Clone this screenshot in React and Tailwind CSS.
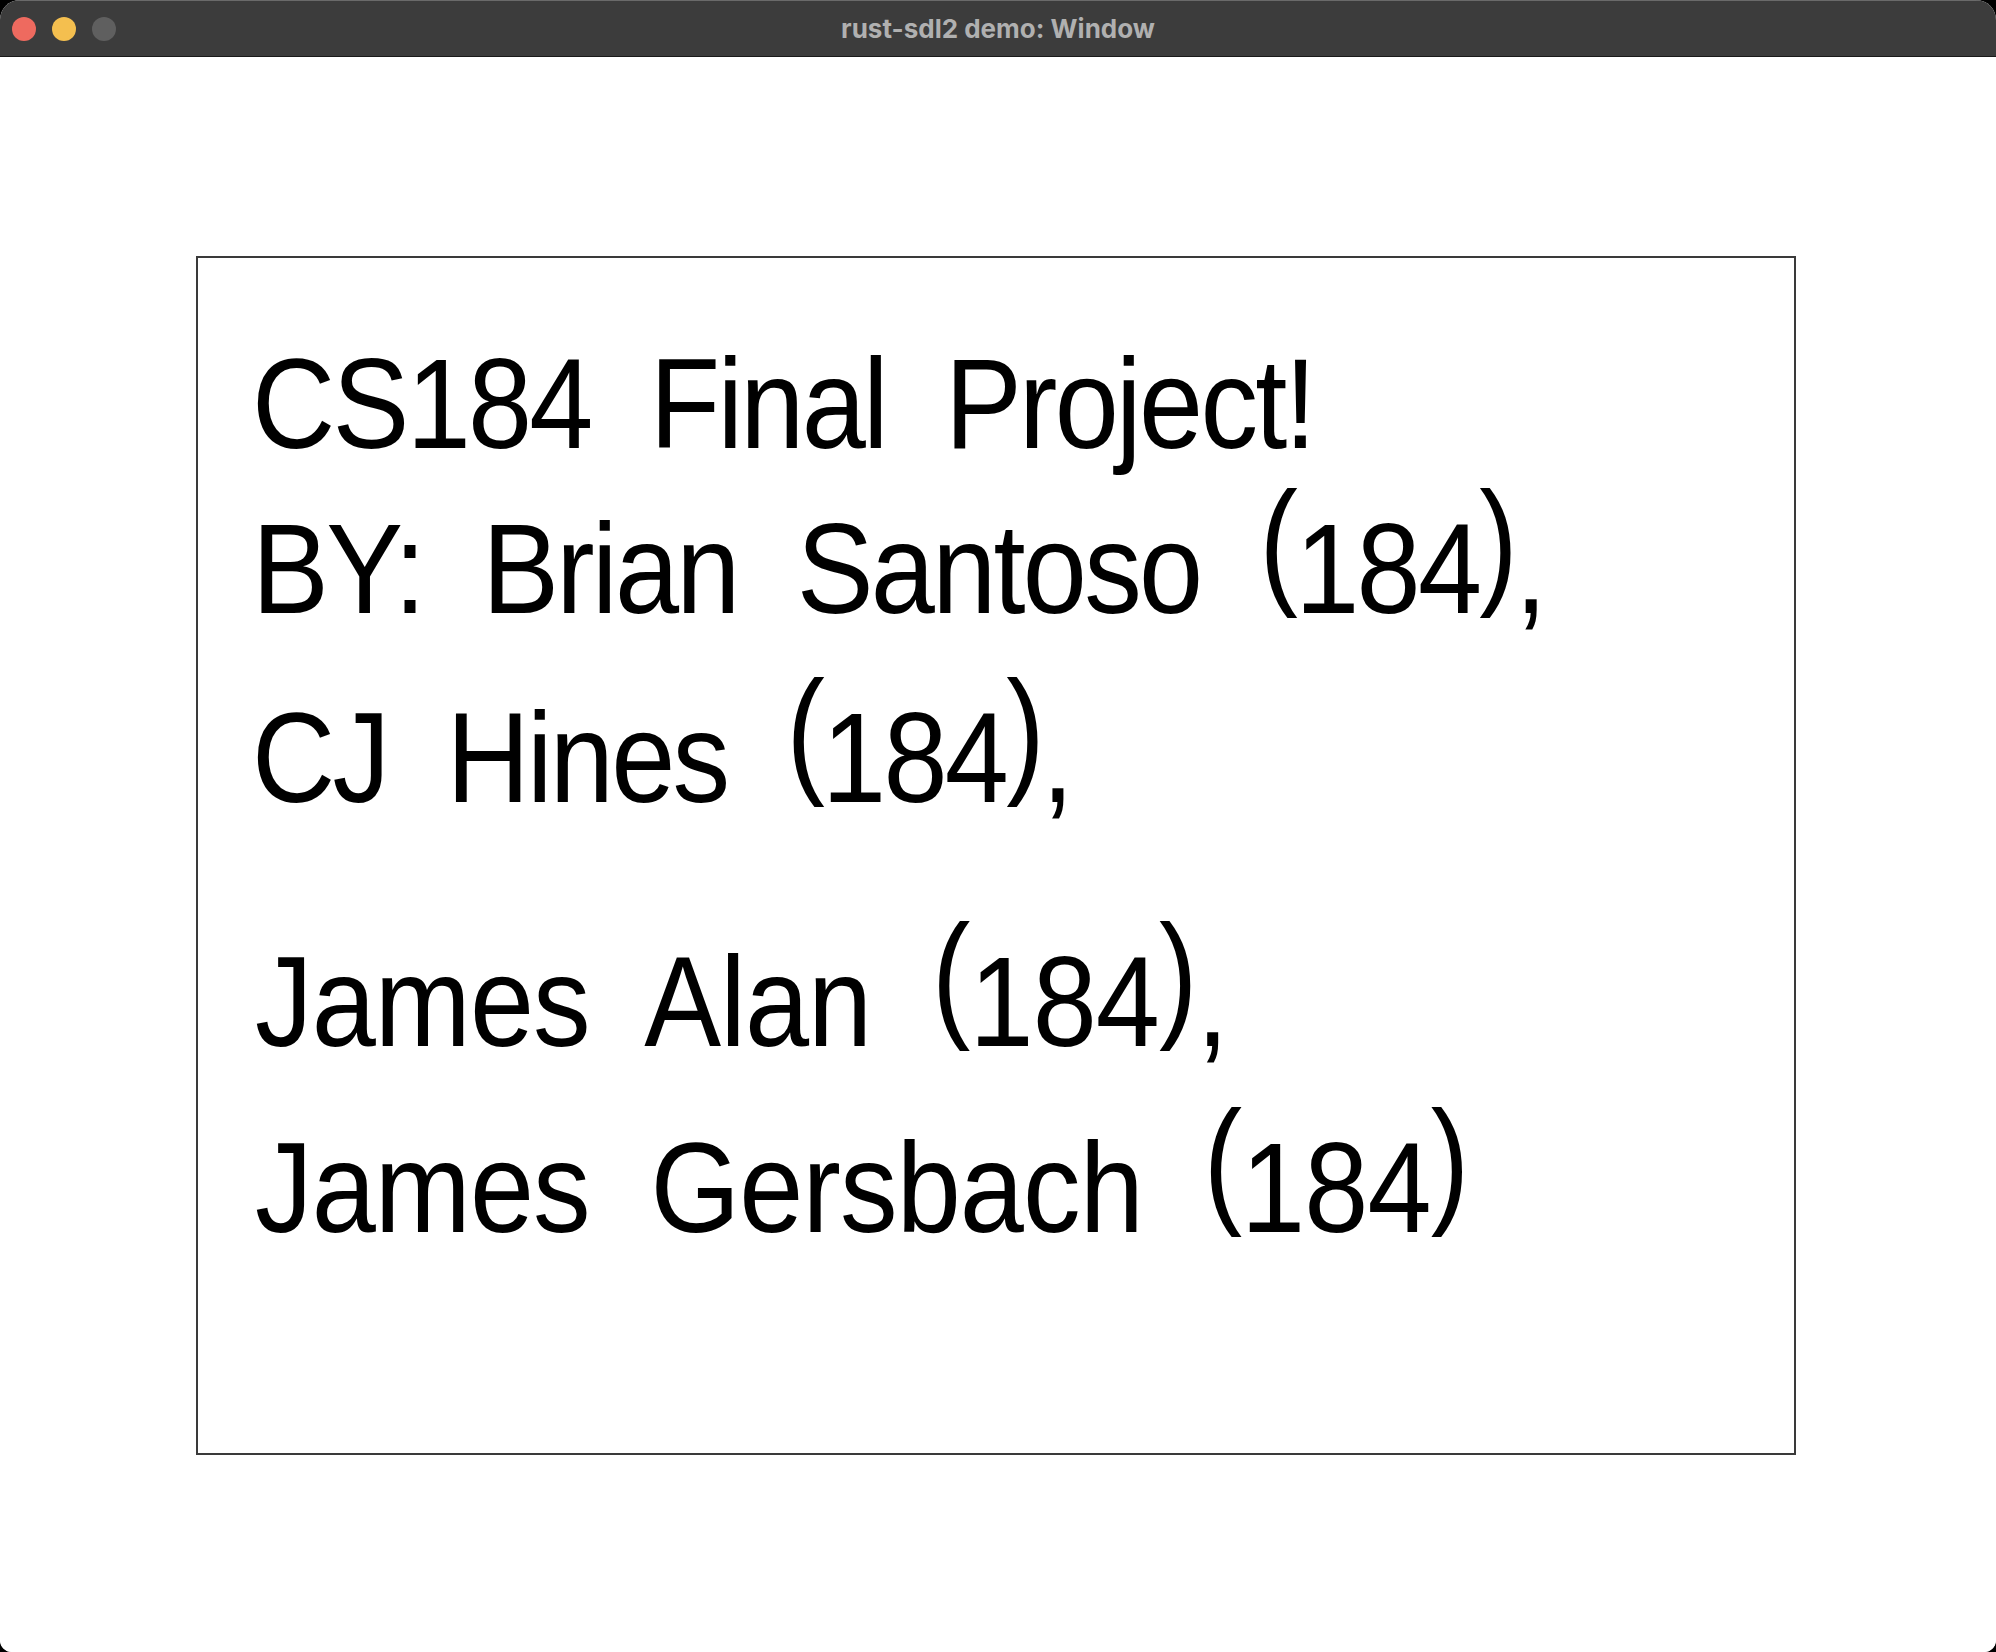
function P({ c }) {
  return <span className="inline-block scale-y-[1.08] -translate-y-[28px]">{c}</span>;
}

export default function App() {
  const base = "whitespace-nowrap leading-none text-[128px] text-black origin-left scale-x-[0.9] [word-spacing:33px]";
  const line = `${base} tracking-[-3px]`;
  const line2 = `${base} tracking-[-1px]`;
  return (
    <div className="w-[1996px] h-[1652px] bg-black">
      <div className="w-full h-full flex flex-col rounded-t-[20px] rounded-b-[12px] overflow-hidden bg-white">
        <div className="relative h-[57px] shrink-0 bg-[#3c3c3c] border-t border-[#6a6a6a] border-b border-b-[#1a1a1a] flex items-center">
          <div className="flex items-center gap-4 pl-3">
            <div className="w-6 h-6 rounded-full bg-[#ee6a5f]" />
            <div className="w-6 h-6 rounded-full bg-[#f4bf4f]" />
            <div className="w-6 h-6 rounded-full bg-[#5f5f5f]" />
          </div>
          <div className="absolute inset-0 flex items-center justify-center text-[26px] font-bold text-[#b0b0b0] font-['Inter',sans-serif]">
            rust-sdl2 demo: Window
          </div>
        </div>
        <div className="flex-1 bg-white">
          <div className="ml-[196px] mt-[199px] w-[1600px] h-[1199px] border-2 border-[#3a3a3a] font-['Liberation_Sans',Arial,sans-serif]">
            <div className={`${line} ml-[54px] mt-[82px]`}>CS184 Final Project!</div>
            <div className={`${line} ml-[54px] mt-[37px]`}>BY: Brian Santoso <P c="(" />184<P c=")" />,</div>
            <div className={`${line} ml-[54px] mt-[61px]`}>CJ Hines <P c="(" />184<P c=")" />,</div>
            <div className={`${line2} ml-[57px] mt-[116px]`}>James Alan <P c="(" />184<P c=")" />,</div>
            <div className={`${line2} ml-[57px] mt-[58px]`}>James Gersbach <P c="(" />184<P c=")" /></div>
          </div>
        </div>
      </div>
    </div>
  );
}
